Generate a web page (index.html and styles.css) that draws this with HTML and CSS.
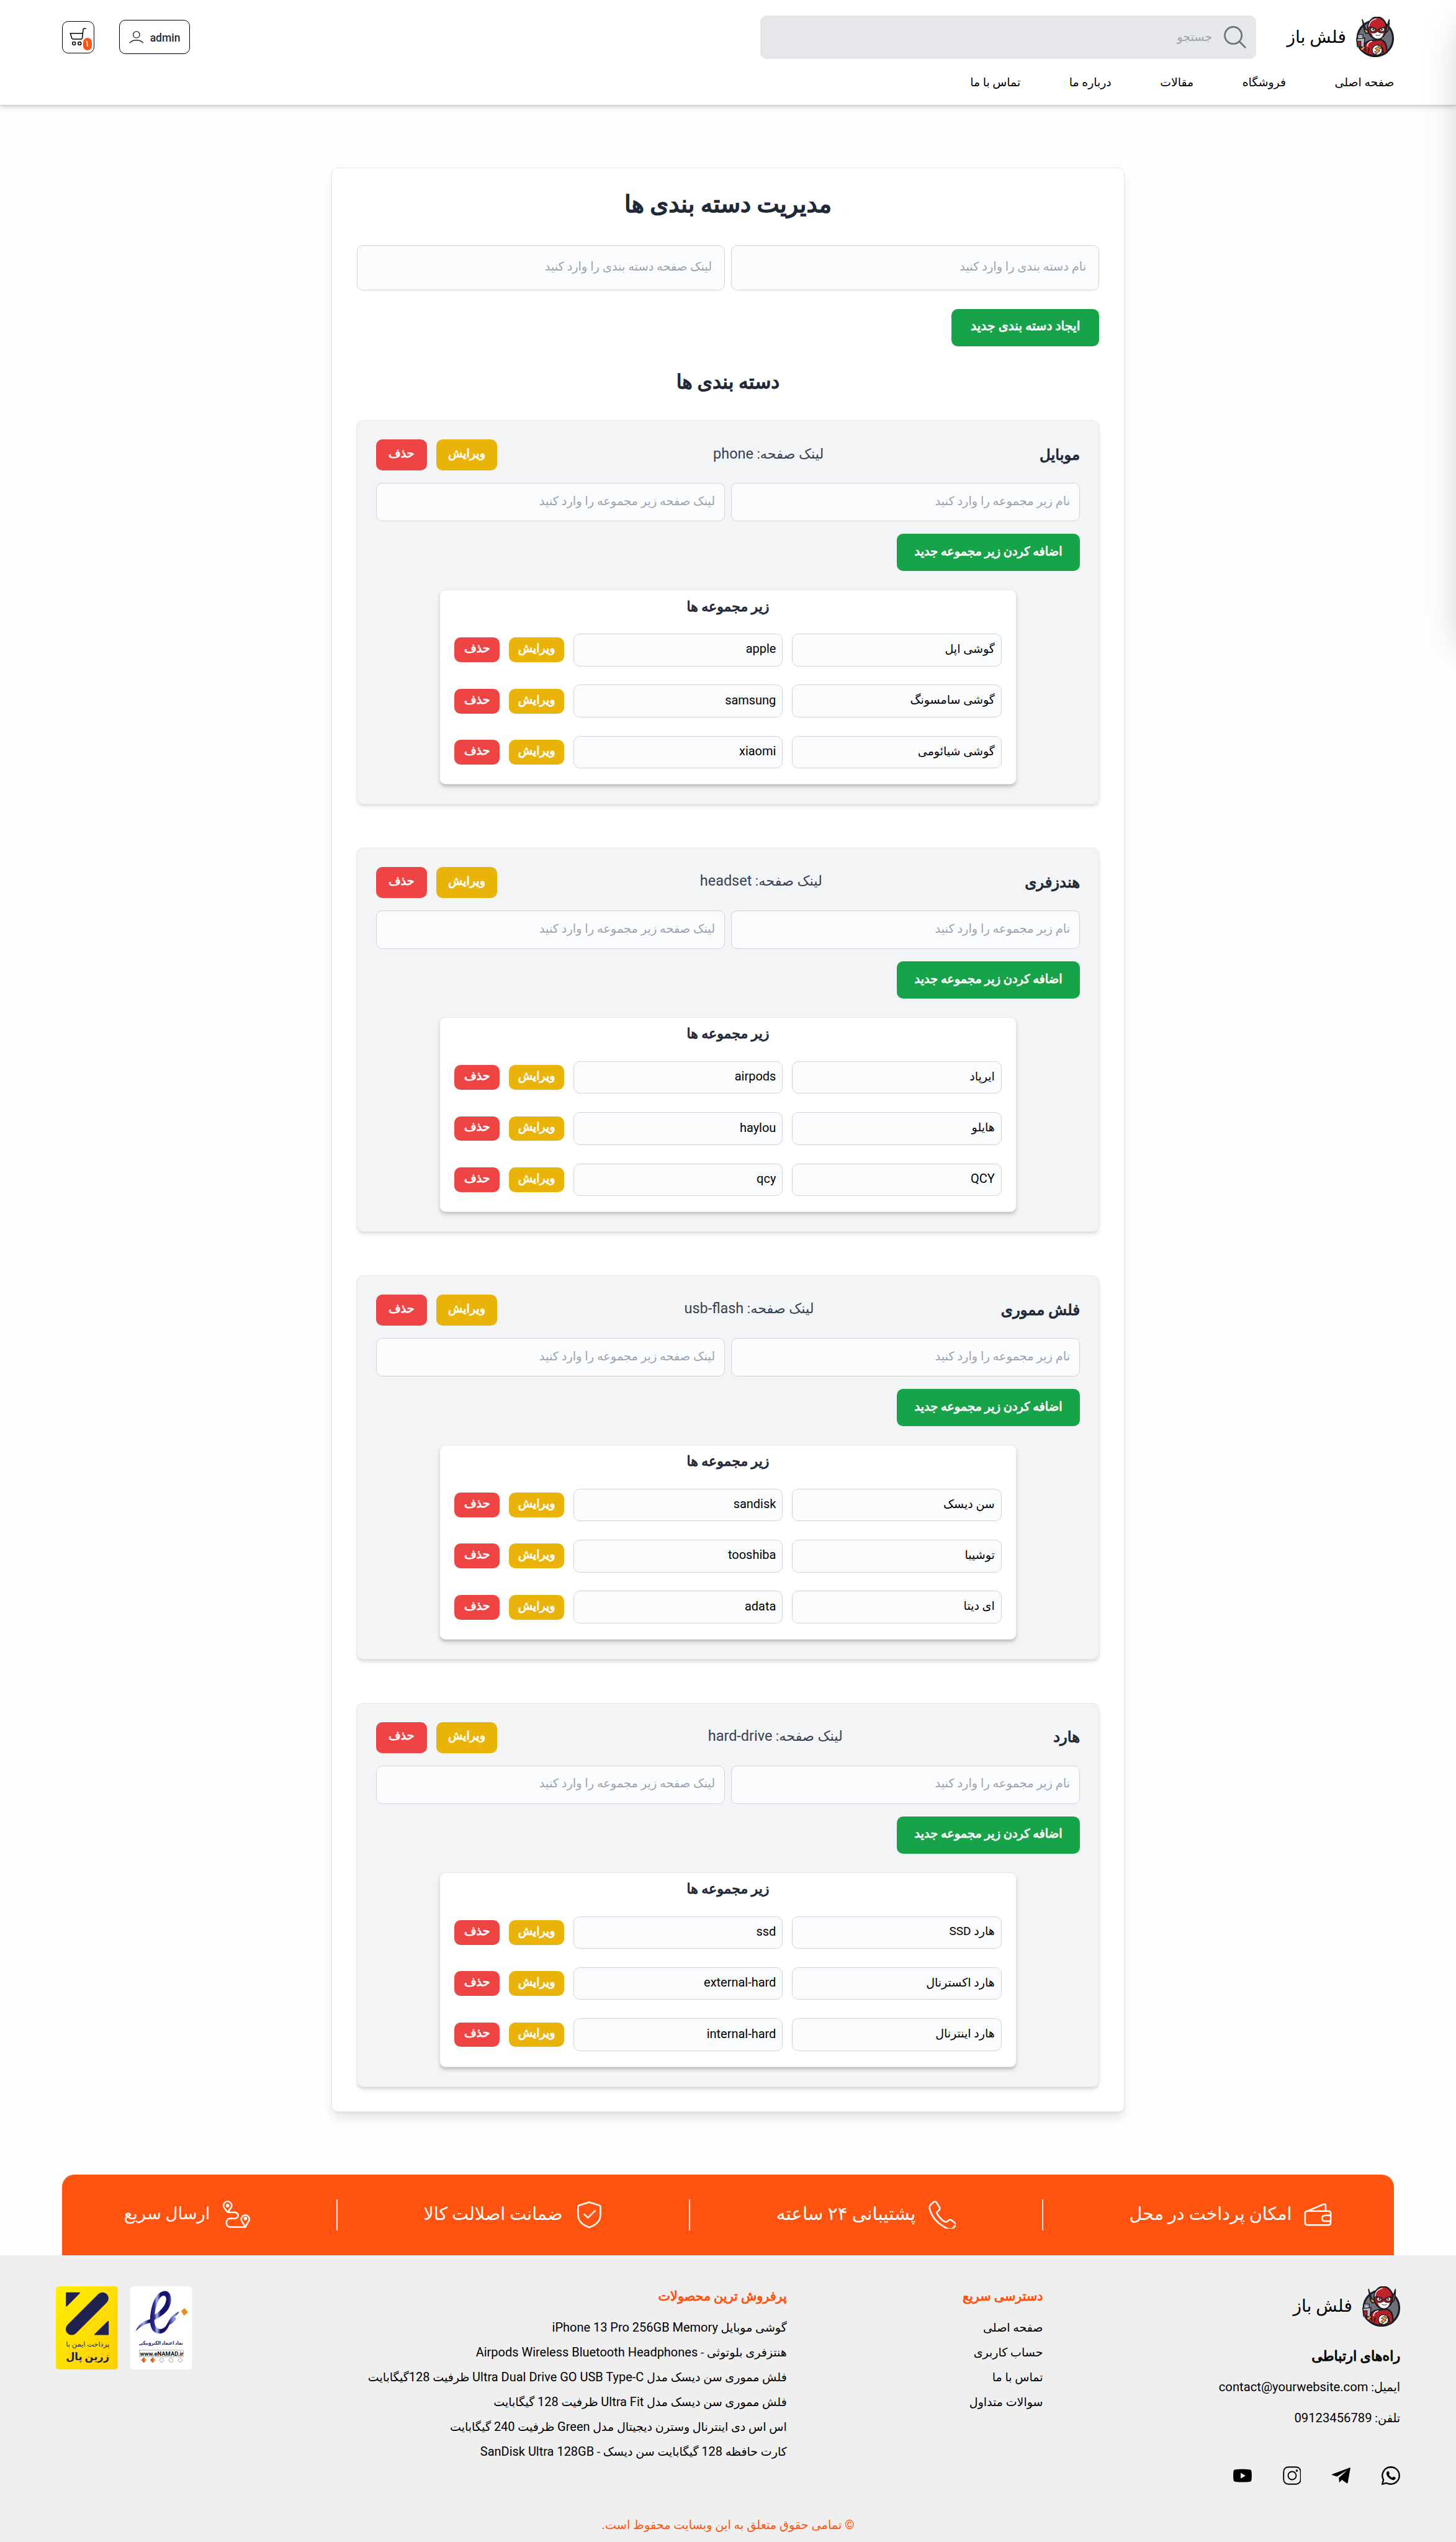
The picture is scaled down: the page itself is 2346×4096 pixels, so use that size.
FILE: index.html
```html
<!DOCTYPE html>
<html lang="fa" dir="rtl">
<head>
<meta charset="utf-8">
<title>فلش باز - مدیریت دسته بندی ها</title>
<link rel="stylesheet" href="styles.css">
</head>
<body>
<svg class="defs" width="0" height="0" aria-hidden="true">
  <symbol id="logo" viewBox="0 0 100 104">
    <circle cx="51" cy="56" r="46" fill="#6f7178" stroke="#191d24" stroke-width="5"/>
    <path d="M23 72Q28 63 43 61L66 59Q78 64 80 78L81 92Q67 102 50 101Q34 100 22 92Q10 84 8 76L17 74L25 84Z" fill="#b92026" stroke="#191d24" stroke-width="4"/>
    <path d="M31 77Q30 66 43 63" fill="none" stroke="#fff" stroke-width="2.4"/>
    <path d="M69 78L72 94M35 80L33 92" stroke="#191d24" stroke-width="3"/>
    <path d="M18 8L26 33Q33 34 34 39Q34 42 28 43Q23 40 22 30ZM87 8L80 32Q76 30 75 38Q79 42 83 38Q87 28 87 8Z" fill="#f2a23a" stroke="#191d24" stroke-width="3" stroke-linejoin="round"/>
    <ellipse cx="56" cy="29" rx="24" ry="28" fill="#c02329" stroke="#191d24" stroke-width="4"/>
    <path d="M34 26Q36 8 54 5" fill="none" stroke="#fff" stroke-width="2"/>
    <path d="M42 42Q50 39 56 38Q64 38 72 42Q71 56 57 57Q44 55 42 42Z" fill="#fff"/>
    <path d="M37 27L53 32Q57 36 61 32L77 27Q79 40 69 42Q62 43 57 38Q52 43 45 42Q36 40 37 27Z" fill="#8c171d" stroke="#191d24" stroke-width="1.5"/>
    <ellipse cx="45" cy="33" rx="5.6" ry="5" fill="#fff" stroke="#191d24" stroke-width="1.3"/>
    <ellipse cx="69" cy="33" rx="5.6" ry="5" fill="#fff" stroke="#191d24" stroke-width="1.3"/>
    <circle cx="46" cy="33" r="2.4" fill="#2c3038"/><circle cx="68" cy="33" r="2.4" fill="#2c3038"/>
    <path d="M37 26L53 31M77 26L61 31" stroke="#191d24" stroke-width="2.6"/>
    <path d="M52 47Q59 50 65 47" fill="none" stroke="#191d24" stroke-width="1.5"/>
    <rect x="6" y="46" width="13" height="12" fill="#e9eaee" stroke="#191d24" stroke-width="2.2"/>
    <path d="M10 49v3M14.500 49v3" stroke="#191d24" stroke-width="2"/>
    <path d="M3 57L24 55L22 79L5 77Z" fill="#b9bcc5" stroke="#191d24" stroke-width="2.6"/>
    <path d="M5 63h9v15q-6-2-9-7z" fill="#b92026" stroke="#191d24" stroke-width="2"/>
    <path d="M14 83L22 77L24 80L17 86Z" fill="#f2a23a"/>
    <circle cx="56" cy="86" r="13" fill="#fff" stroke="#191d24" stroke-width="2.400"/>
    <path d="M69 69L50 83L57 85L49 91L54 92L50 99L64 88L59 87L67 81L60 80Z" fill="#f2a23a" stroke="#191d24" stroke-width="1.3"/>
  </symbol>
</svg>

<header class="header">
  <div class="header-top">
    <div class="header-start">
      <a class="brand"><svg class="brand-mark"><use href="#logo"/></svg><span class="brand-name">فلش باز</span></a>
      <div class="search">
        <svg class="search-icon" viewBox="0 0 24 24" fill="none" stroke="currentColor" stroke-width="1.5" stroke-linecap="round"><path d="m21 21-5.197-5.197m0 0A7.500 7.500 0 1 0 5.196 5.196a7.500 7.500 0 0 0 10.607 10.607Z"/></svg>
        <span>جستجو</span>
      </div>
    </div>
    <div class="header-end">
      <a class="user"><span>admin</span><svg class="user-icon" viewBox="0 0 38 32" fill="none" stroke="currentColor" stroke-width="2.200" stroke-linecap="round"><circle cx="19" cy="9.500" r="8.400"/><path d="M1.500 30.500C10 21.500 28 21.500 36.500 30.500"/></svg></a>
      <a class="cart">
        <svg class="cart-icon" viewBox="0 0 44 46" fill="none" stroke="#000" stroke-width="2.400" stroke-linecap="round" stroke-linejoin="round"><path d="M42 1.500h-4.500q-1.800 0-2 2L33 25.500q-.5 3.500-3.500 3.500H9q-2.500 0-3-2.500L2 14h32"/><circle cx="11.500" cy="40" r="4"/><circle cx="26" cy="40" r="4"/></svg>
        <span class="cart-count">۱</span>
      </a>
    </div>
  </div>
  <nav class="nav"><a>صفحه اصلی</a><a>فروشگاه</a><a>مقالات</a><a>درباره ما</a><a>تماس با ما</a></nav>
</header>
<aside class="drawer"></aside>

<main class="panel">
  <h1 class="panel-title">مدیریت دسته بندی ها</h1>
  <form class="pair pair-lg"><input class="field" placeholder="نام دسته بندی را وارد کنید"><input class="field" placeholder="لینک صفحه دسته بندی را وارد کنید"></form>
  <button class="btn btn-green create">ایجاد دسته بندی جدید</button>
  <h2 class="panel-subtitle">دسته بندی ها</h2>

  <section class="category">
    <div class="category-head"><h3>موبایل</h3><p>لینک صفحه: <bdi>phone</bdi></p><div class="actions"><button class="btn btn-yellow">ویرایش</button><button class="btn btn-red">حذف</button></div></div>
    <div class="pair"><input class="field" placeholder="نام زیر مجموعه را وارد کنید"><input class="field" placeholder="لینک صفحه زیر مجموعه را وارد کنید"></div>
    <button class="btn btn-green add">اضافه کردن زیر مجموعه جدید</button>
    <div class="subs">
      <h4>زیر مجموعه ها</h4>
      <div class="sub"><input class="field" value="گوشی اپل"><input class="field latin" value="apple"><button class="btn btn-yellow">ویرایش</button><button class="btn btn-red">حذف</button></div>
      <div class="sub"><input class="field" value="گوشی سامسونگ"><input class="field latin" value="samsung"><button class="btn btn-yellow">ویرایش</button><button class="btn btn-red">حذف</button></div>
      <div class="sub"><input class="field" value="گوشی شیائومی"><input class="field latin" value="xiaomi"><button class="btn btn-yellow">ویرایش</button><button class="btn btn-red">حذف</button></div>
    </div>
  </section>

  <section class="category">
    <div class="category-head"><h3>هندزفری</h3><p>لینک صفحه: <bdi>headset</bdi></p><div class="actions"><button class="btn btn-yellow">ویرایش</button><button class="btn btn-red">حذف</button></div></div>
    <div class="pair"><input class="field" placeholder="نام زیر مجموعه را وارد کنید"><input class="field" placeholder="لینک صفحه زیر مجموعه را وارد کنید"></div>
    <button class="btn btn-green add">اضافه کردن زیر مجموعه جدید</button>
    <div class="subs">
      <h4>زیر مجموعه ها</h4>
      <div class="sub"><input class="field" value="ایرپاد"><input class="field latin" value="airpods"><button class="btn btn-yellow">ویرایش</button><button class="btn btn-red">حذف</button></div>
      <div class="sub"><input class="field" value="هایلو"><input class="field latin" value="haylou"><button class="btn btn-yellow">ویرایش</button><button class="btn btn-red">حذف</button></div>
      <div class="sub"><input class="field latin" value="QCY"><input class="field latin" value="qcy"><button class="btn btn-yellow">ویرایش</button><button class="btn btn-red">حذف</button></div>
    </div>
  </section>

  <section class="category">
    <div class="category-head"><h3>فلش مموری</h3><p>لینک صفحه: <bdi>usb-flash</bdi></p><div class="actions"><button class="btn btn-yellow">ویرایش</button><button class="btn btn-red">حذف</button></div></div>
    <div class="pair"><input class="field" placeholder="نام زیر مجموعه را وارد کنید"><input class="field" placeholder="لینک صفحه زیر مجموعه را وارد کنید"></div>
    <button class="btn btn-green add">اضافه کردن زیر مجموعه جدید</button>
    <div class="subs">
      <h4>زیر مجموعه ها</h4>
      <div class="sub"><input class="field" value="سن دیسک"><input class="field latin" value="sandisk"><button class="btn btn-yellow">ویرایش</button><button class="btn btn-red">حذف</button></div>
      <div class="sub"><input class="field" value="توشیبا"><input class="field latin" value="tooshiba"><button class="btn btn-yellow">ویرایش</button><button class="btn btn-red">حذف</button></div>
      <div class="sub"><input class="field" value="ای دیتا"><input class="field latin" value="adata"><button class="btn btn-yellow">ویرایش</button><button class="btn btn-red">حذف</button></div>
    </div>
  </section>

  <section class="category">
    <div class="category-head"><h3>هارد</h3><p>لینک صفحه: <bdi>hard-drive</bdi></p><div class="actions"><button class="btn btn-yellow">ویرایش</button><button class="btn btn-red">حذف</button></div></div>
    <div class="pair"><input class="field" placeholder="نام زیر مجموعه را وارد کنید"><input class="field" placeholder="لینک صفحه زیر مجموعه را وارد کنید"></div>
    <button class="btn btn-green add">اضافه کردن زیر مجموعه جدید</button>
    <div class="subs">
      <h4>زیر مجموعه ها</h4>
      <div class="sub"><input class="field" value="هارد SSD"><input class="field latin" value="ssd"><button class="btn btn-yellow">ویرایش</button><button class="btn btn-red">حذف</button></div>
      <div class="sub"><input class="field" value="هارد اکسترنال"><input class="field latin" value="external-hard"><button class="btn btn-yellow">ویرایش</button><button class="btn btn-red">حذف</button></div>
      <div class="sub"><input class="field" value="هارد اینترنال"><input class="field latin" value="internal-hard"><button class="btn btn-yellow">ویرایش</button><button class="btn btn-red">حذف</button></div>
    </div>
  </section>
</main>

<section class="features">
  <div class="feature"><svg viewBox="0 0 72 72"><path d="M9 27L51 9q5-1 5 4v14M9 27h54q6 0 6 6v24q0 6-6 6H9q-6 0-6-6V32q0-4 6-5zM69 38H55q-8 0-8 7.500t8 7.500h14"/></svg><span>امکان پرداخت در محل</span></div>
  <i class="divider"></i>
  <div class="feature support"><svg viewBox="0 0 72 72"><path d="M5 11L14 3q4-2 7 2l8 13q1 4-2 7l-5 4q-1 3 3 9 8 11 17 16 4 2 6 0l5-4q3-2 6 0l10 8q3 3 0 7l-7 7q-5 3-15-1Q12 54 3 21q-1-6 2-10z"/></svg><span>پشتیبانی ۲۴ ساعته</span></div>
  <i class="divider"></i>
  <div class="feature"><svg viewBox="0 0 72 72"><path d="M36 4L62 12q3 1 3 4v20c0 17-12 27-29 33C19 63 7 53 7 36V16q0-3 3-4zM23 35l10 9 18-18"/></svg><span>ضمانت اصلالت کالا</span></div>
  <i class="divider"></i>
  <div class="feature delivery"><svg viewBox="0 0 72 72"><path d="M14 30L5 18A10.500 10.500 0 1 1 23 18zM14 30h18q9 1 9 8t-9 8H20q-9 1-9 11t9 11h40M60 68L50 52A10.500 10.500 0 1 1 70 50z"/><circle cx="14" cy="13" r="2.500"/><circle cx="60" cy="46" r="2.500"/></svg><span>ارسال سریع</span></div>
</section>

<footer class="footer">
  <div class="footer-cols">
    <div class="contact">
      <a class="brand"><svg class="brand-mark"><use href="#logo"/></svg><span class="brand-name">فلش باز</span></a>
      <h5>راه‌های ارتباطی</h5>
      <p>ایمیل: <bdi>contact@yourwebsite.com</bdi></p>
      <p>تلفن: <bdi>09123456789</bdi></p>
      <div class="social">
        <svg viewBox="0 0 24 24"><path d="M12 1a11 11 0 0 1 0 22q-3 0-5.400-1.400L1 23l1.500-5.600A11 11 0 0 1 12 1z" fill="none" stroke="#000" stroke-width="1.900"/><path d="M8.500 6.500c.6 0 .8.1 1 .6l.8 2c.1.400 0 .7-.8 1.700 1.200 2 2.500 3 4.500 3.900.9-1 1.200-1.500 1.800-1.300l2.200 1.100c.4.200.3 1.200 0 1.800-.7 1.300-2.500 1.700-4 1.300C10 16.500 6.500 12.500 6.300 9.500c0-1.600 1-3 2.200-3z"/></svg>
        <svg viewBox="0 0 24 24"><path d="M24 2L20.500 21.300q-.3 1.100-1.400.6L13 17.500 9.500 21 9 14.800 20 5 6.500 13.300 0.500 11.500q-1-.6 0-1.200L23 1.900q1-.4 1 .1z"/></svg>
        <svg viewBox="0 0 24 24" fill="none" stroke="#000" stroke-width="1.500"><rect x="1" y="1" width="22" height="22" rx="6"/><circle cx="12" cy="12" r="5.200"/><circle cx="18" cy="5.700" r=".7" fill="#000"/></svg>
        <svg viewBox="0 0 24 24"><path d="M3 4.200Q12 3 21 4.200 23.500 4.500 23.700 7q.5 5 0 10-.2 2.800-2.700 3-9 .8-18 0Q.5 19.700.3 17q-.5-5 0-10Q.5 4.500 3 4.200zM9.700 8.500v7.400l6.200-3.700z"/></svg>
      </div>
    </div>
    <div class="links"><h6>دسترسی سریع</h6><a>صفحه اصلی</a><a>حساب کاربری</a><a>تماس با ما</a><a>سوالات متداول</a></div>
    <div class="links products"><h6>پرفروش ترین محصولات</h6><a>گوشی موبایل <span class="en">iPhone 13 Pro 256GB Memory</span></a><a>هنتزفری بلوتوثی - <span class="en">Airpods Wireless Bluetooth Headphones</span></a><a>فلش مموری سن دیسک مدل <span class="en">Ultra Dual Drive GO USB Type-C</span> ظرفیت <span class="en">128</span>گیگابایت</a><a>فلش مموری سن دیسک مدل <span class="en">Ultra Fit</span> ظرفیت <span class="en">128</span> گیگابایت</a><a>اس اس دی اینترنال وسترن دیجیتال مدل <span class="en">Green</span> ظرفیت <span class="en">240</span> گیگابایت</a><a>کارت حافظه <span class="en">128</span> گیگابایت سن دیسک - <span class="en">SanDisk Ultra 128GB</span></a></div>
    <div class="badges">
      <svg class="badge" viewBox="0 0 160 216">
        <defs><linearGradient id="ink" gradientUnits="userSpaceOnUse" x1="14" y1="0" x2="128" y2="0"><stop offset="0" stop-color="#15126e"/><stop offset=".18" stop-color="#9aa9e2"/><stop offset=".3" stop-color="#15126e"/><stop offset=".42" stop-color="#2c2a8c"/><stop offset=".48" stop-color="#a8b8ec"/><stop offset=".56" stop-color="#15126e"/><stop offset=".74" stop-color="#15126e"/><stop offset=".86" stop-color="#8fa2de"/><stop offset="1" stop-color="#15126e"/></linearGradient>
        <linearGradient id="gem"><stop offset="0" stop-color="#e33"/><stop offset=".5" stop-color="#e60"/><stop offset="1" stop-color="#fd3"/></linearGradient></defs>
        <rect width="160" height="216" fill="#fff"/>
        <path fill="url(#ink)" fill-rule="evenodd" d="M14 116Q21 94 51 85C52 50 66 12 90 12C112 14 109 54 88 70Q76 80 62 87C62 104 70 112 80 110C92 108 95 96 102 85Q110 72 126 65Q124 72 114 79Q120 82 114 90Q108 97 101 99C94 115 86 122 76 122C60 122 53 110 51 94Q30 99 14 116ZM63 73C66 45 76 24 86 24C100 26 92 56 63 73Z"/>
        <path d="M131 64L140 56 149 67 139 76Z" fill="#e98d1c"/>
        <text class="mark-fa" x="79" y="151" textLength="114" lengthAdjust="spacingAndGlyphs">نماد اعتماد الکترونیکی</text>
        <rect x="23" y="165" width="114" height="17" fill="none" stroke="#555" stroke-width=".7"/>
        <text class="mark-url" x="81" y="180" textLength="112" lengthAdjust="spacingAndGlyphs">www.eNAMAD.ir</text>
        <g stroke="#333" stroke-width=".8" fill="#fff"><path fill="url(#gem)" d="M29 190.500l6-6.500 6 6.500-6 6.500z"/><path fill="url(#gem)" d="M52 190.500l6-6.500 6 6.500-6 6.500z"/><path d="M75 190.500l6-6.500 6 6.500-6 6.500zM99 190.500l6-6.500 6 6.500-6 6.500zM123 190.500l6-6.500 6 6.500-6 6.500z"/></g>
      </svg>
      <svg class="badge" viewBox="0 0 160 216">
        <defs><linearGradient id="sun" x1="0" y1="0" x2="1" y2="1"><stop offset="0" stop-color="#fff000"/><stop offset=".45" stop-color="#ffe000"/><stop offset="1" stop-color="#fdd000"/></linearGradient></defs>
        <rect width="160" height="216" fill="url(#sun)"/>
        <g fill="#1f2250" stroke="#1f2250" stroke-width="3" stroke-linejoin="round"><path d="M27.500 17H61L27.500 50.500zM135 91v33.500h-34z"/></g>
        <path d="M41 110.500L120.500 31" stroke="#1f2250" stroke-width="31" stroke-linecap="round"/>
        <text class="pay-line" x="82" y="156" textLength="112" lengthAdjust="spacingAndGlyphs">پرداخت ایمن با</text>
        <text class="pay-name" x="82" y="190" textLength="112" lengthAdjust="spacingAndGlyphs">زرین پال</text>
      </svg>
    </div>
  </div>
  <p class="copyright">© تمامی حقوق متعلق به این وبسایت محفوظ است.</p>
</footer>
</body>
</html>
```
FILE: styles.css
```css
/* 1rem is one hundred design pixels */
html { font-size: 62.394px; overflow: hidden; }
* { box-sizing: border-box; }
body {
  position: relative;
  margin: 0;
  width: 37.6rem;
  height: 65.66rem;
  overflow: hidden;
  display: flex;
  flex-direction: column;
  background: #fefefe;
  color: #000;
  font: 400 .305rem/1.5 Roboto, "DejaVu Sans", sans-serif;
}
h1, h2, h3, h4, h5, h6, p { margin: 0; font-weight: 400; }
h1, h2, h3, h4, h5, h6, .btn { -webkit-text-stroke: .045em currentColor; }
button, input { font: inherit; }
/* Latin runs are set slightly larger than the Persian face beside them */
bdi, .en { font-size: 1.05em; line-height: 1; }
.defs { position: absolute; }

.header {
  flex: none;
  height: 2.72rem;
  padding: .4rem 1.6rem 0;
  background: #fff;
  border-bottom: .02rem solid #ccc;
  box-shadow: 0 .08rem .12rem -.02rem rgba(0,0,0,.12), 0 .04rem .08rem -.04rem rgba(0,0,0,.12);
}
.header-top, .header-start, .header-end { display: flex; align-items: center; }
.header-top { justify-content: space-between; height: 1.12rem; }
.header-start { gap: .8rem; }
.header-end { gap: .64rem; }
.brand { display: flex; align-items: center; gap: .24rem; }
.brand-mark { width: 1rem; height: 1.04rem; }
.brand-name { font-size: .45rem; line-height: 1rem; white-space: nowrap; width: 1.52rem; }
.header .brand { width: 2.76rem; }
.search {
  display: flex; align-items: center; gap: .24rem;
  width: 12.8rem; height: 1.12rem; padding: 0 .2rem;
  border-radius: .16rem; background: #e5e7eb; color: #9ca3af;
}
.search-icon { width: .7rem; height: .7rem; color: #6b7280; }
.user {
  display: flex; align-items: center; justify-content: space-between;
  width: 1.82rem; height: .88rem; padding: 0 .23rem;
  border: .02rem solid #000; border-radius: .16rem;
  color: #1f2937; font-size: .28rem; font-weight: 500;
  box-shadow: 0 .02rem .04rem rgba(0,0,0,.05);
}
.user span { padding-top: .04rem; }
.user-icon { width: .38rem; height: .32rem; }
.cart { position: relative; width: .84rem; height: .84rem; border: .02rem solid #000; border-radius: .16rem; }
.cart-icon { display: block; width: .44rem; height: .46rem; margin: .17rem .19rem 0 0; }
.cart-count {
  position: absolute; right: .06rem; bottom: .06rem;
  width: .22rem; height: .32rem; border-radius: .12rem;
  background: #ff530f; color: #fff; font-size: .24rem; line-height: .3rem; text-align: center;
}
.nav { display: flex; gap: 1.26rem; margin-top: .4rem; line-height: .42rem; font-size: .302rem; }
.drawer {
  position: absolute; top: 0; right: -4rem; width: 4rem; height: 16.4rem;
  background: #fff; box-shadow: 0 .5rem 1rem -.24rem rgba(0,0,0,.25);
}

.panel {
  width: 20.48rem; height: 50.22rem; flex: none;
  margin: 1.6rem auto 1.62rem; padding: 0 .64rem;
  border: .02rem solid #e5e7eb; border-radius: .16rem; background: #fff;
  box-shadow: 0 .2rem .3rem -.06rem rgba(0,0,0,.1), 0 .08rem .12rem -.08rem rgba(0,0,0,.1);
  color: #1f2937;
}
.panel-title { height: 2rem; padding-top: .56rem; font-size: .613rem; line-height: .8rem; text-align: center; }
.pair { display: flex; gap: .16rem; height: 1rem; }
.pair-lg { height: 1.16rem; }
.field {
  flex: 1; min-width: 0; height: 100%; padding: 0 .24rem .04rem;
  border: .02rem solid #d1d5db; border-radius: .16rem; background: #fafbfd; color: #000;
}
.pair .field { font-size: .311rem; padding-bottom: .06rem; }
.pair-lg .field { padding: 0 .32rem .06rem; }
.field::placeholder { color: #9ca3af; opacity: 1; }
.latin { font-size: .32rem; }
.btn {
  display: flex; align-items: center; justify-content: center; padding: 0 0 .06rem;
  border: 0; border-radius: .16rem; color: #fff; white-space: nowrap;
}
.btn-green { background: #16a34a; height: .96rem; }
.btn-yellow { background: #eab308; }
.btn-red { background: #ef4444; }
.create { width: 3.81rem; margin-top: .48rem; font-size: .327rem; }
.add { width: 4.73rem; margin-top: .32rem; font-size: .31rem; }
.panel-subtitle { height: 1.92rem; padding-top: .62rem; font-size: .5rem; line-height: .64rem; text-align: center; }

.category {
  height: 9.92rem; margin-bottom: 1.12rem; padding: .48rem;
  border: .02rem solid #e5e7eb; border-radius: .16rem; background: #f3f4f6;
  box-shadow: 0 .08rem .12rem -.02rem rgba(0,0,0,.1), 0 .04rem .08rem -.04rem rgba(0,0,0,.1);
}
.category-head { display: flex; align-items: center; justify-content: space-between; height: .8rem; margin-bottom: .32rem; }
.category-head h3 { font-size: .39rem; }
.category-head p { font-size: .358rem; color: #374151; padding-bottom: .06rem; }
.actions { display: flex; gap: .24rem; }
.actions .btn { height: .8rem; width: 1.58rem; }
.actions .btn-red { width: 1.31rem; }
.subs {
  width: 14.92rem; height: 5.03rem; margin: .48rem auto 0; padding: 0 .38rem;
  border: .02rem solid #e5e7eb; border-radius: .16rem; background: #fff;
  box-shadow: 0 .08rem .12rem -.02rem rgba(0,0,0,.16), 0 .04rem .08rem -.04rem rgba(0,0,0,.16);
}
.subs h4 { height: 1.12rem; padding-top: .1rem; font-size: .352rem; line-height: .64rem; text-align: center; }
.sub { display: flex; align-items: center; gap: .24rem; height: .84rem; margin-bottom: .48rem; }
.sub .field { padding: 0 .16rem .06rem; }
.sub .btn { height: .64rem; width: 1.42rem; }
.sub .btn-red { width: 1.17rem; }

.features {
  display: flex; align-items: center; justify-content: space-between; flex: none;
  height: 2.08rem; margin: 0 1.6rem; padding: 0 1.6rem;
  border-radius: .32rem .32rem 0 0; background: #ff530f; color: #fff; font-size: .458rem;
}
.feature { display: flex; align-items: center; gap: .32rem; white-space: nowrap; }
.feature svg { width: .72rem; height: .72rem; fill: none; stroke: #fff; stroke-width: 4; stroke-linejoin: round; stroke-linecap: round; }
.feature span { line-height: .9rem; padding-bottom: .06rem; }
.support { font-size: .472rem; }
.delivery { font-size: .438rem; }
.divider { width: .04rem; height: .8rem; background: #e5e7eb; }

.footer { height: 7.42rem; flex: none; padding: .8rem 1.44rem 0; background: #efefef; }
.footer-cols { display: flex; justify-content: space-between; height: 5.87rem; white-space: nowrap; }
.contact h5 { margin-top: .41rem; font-size: .357rem; line-height: .72rem; }
.contact p { position: relative; top: .05rem; line-height: .8rem; font-size: .309rem; }
.social { display: flex; gap: .8rem; margin-top: .88rem; }
.social svg { width: .48rem; height: .48rem; }
.links { display: flex; flex-direction: column; }
.links h6 { margin-bottom: .24rem; font-size: .332rem; line-height: .52rem; color: #ff530f; }
.links a { line-height: .64rem; }
.badges { display: flex; gap: .32rem; }
.badge { width: 1.6rem; height: 2.16rem; border-radius: .08rem; }
.badge text { text-anchor: middle; font-family: Roboto, "DejaVu Sans", sans-serif; }
.mark-fa { font-size: 13px; font-weight: 700; fill: #15126e; }
.mark-url { font-size: 15px; font-weight: 700; fill: #111; }
.pay-line { font-size: 17px; fill: #1f2250; }
.pay-name { font-size: 27px; font-weight: 700; fill: #1f2250; }
.copyright { font-size: .31rem; line-height: .6rem; text-align: center; color: #ff530f; }
```
